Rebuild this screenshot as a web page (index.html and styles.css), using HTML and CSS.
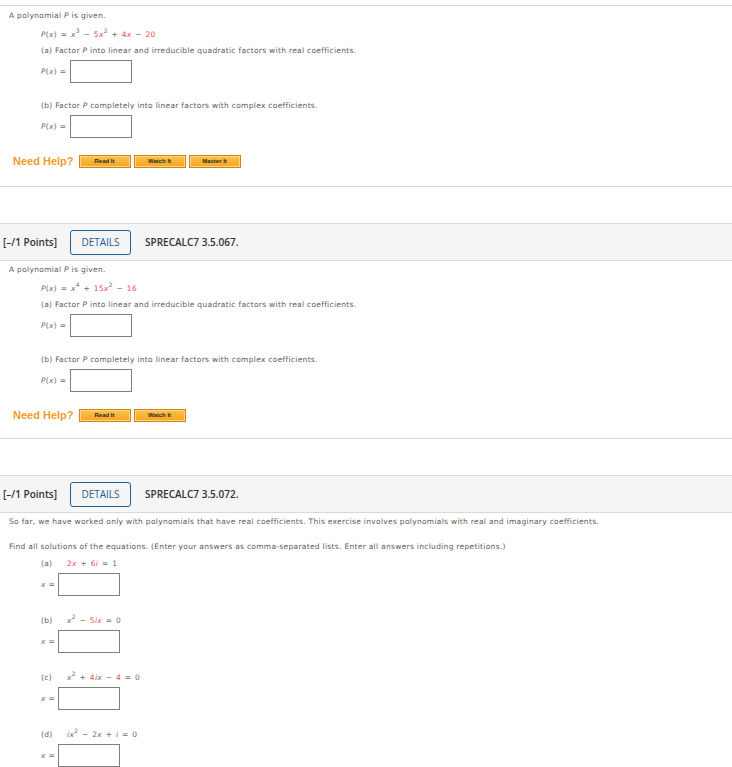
FILE: index.html
```html
<!DOCTYPE html>
<html lang="en">
<head>
  <meta charset="UTF-8">
  <meta name="viewport" content="width=device-width, initial-scale=1.0">
  <title>Assignment</title>
  <link rel="stylesheet" href="styles.css">
</head>

<body>
  <!-- tail of previous question -->
  <div class="question first">
    <div class="q-body">
      <p class="intro">A polynomial <i>P</i> is given.</p>
      <p class="eqn"><i>P</i>(<i>x</i>) = <i>x</i><sup>3</sup> &minus; <span class="rand">5<i>x</i></span><sup>2</sup> + <span class="rand">4<i>x</i></span> &minus; <span class="rand">20</span></p>
      <p class="part">(a) Factor <i>P</i> into linear and irreducible quadratic factors with real coefficients.</p>
      <div class="answer">
        <span class="lbl"><i>P</i>(<i>x</i>) =</span>
        <span class="box"></span>
      </div>
      <p class="part part-b">(b) Factor <i>P</i> completely into linear factors with complex coefficients.</p>
      <div class="answer">
        <span class="lbl"><i>P</i>(<i>x</i>) =</span>
        <span class="box"></span>
      </div>
      <div class="help">
        <span class="help-title">Need Help?</span>
        <span class="help-btn">Read It</span>
        <span class="help-btn">Watch It</span>
        <span class="help-btn">Master It</span>
      </div>
    </div>
  </div>

  <div class="question">
    <div class="q-head">
      <span class="points">[&ndash;/1 Points]</span>
      <span class="details">DETAILS</span>
      <span class="ref">SPRECALC7 3.5.067.</span>
    </div>
    <div class="q-body">
      <p class="intro">A polynomial <i>P</i> is given.</p>
      <p class="eqn"><i>P</i>(<i>x</i>) = <i>x</i><sup>4</sup> + <span class="rand">15<i>x</i></span><sup>2</sup> &minus; <span class="rand">16</span></p>
      <p class="part">(a) Factor <i>P</i> into linear and irreducible quadratic factors with real coefficients.</p>
      <div class="answer">
        <span class="lbl"><i>P</i>(<i>x</i>) =</span>
        <span class="box"></span>
      </div>
      <p class="part part-b">(b) Factor <i>P</i> completely into linear factors with complex coefficients.</p>
      <div class="answer">
        <span class="lbl"><i>P</i>(<i>x</i>) =</span>
        <span class="box"></span>
      </div>
      <div class="help">
        <span class="help-title">Need Help?</span>
        <span class="help-btn">Read It</span>
        <span class="help-btn">Watch It</span>
      </div>
    </div>
  </div>

  <div class="question">
    <div class="q-head">
      <span class="points">[&ndash;/1 Points]</span>
      <span class="details">DETAILS</span>
      <span class="ref">SPRECALC7 3.5.072.</span>
    </div>
    <div class="q-body">
      <p class="intro">So far, we have worked only with polynomials that have real coefficients. This exercise involves polynomials with real and imaginary coefficients.</p>
      <p class="intro find">Find all solutions of the equations. (Enter your answers as comma-separated lists. Enter all answers including repetitions.)</p>

      <p class="sub first-sub"><span class="sub-tag">(a)</span><span class="rand">2<i>x</i></span> + <span class="rand">6<i>i</i></span> = 1</p>
      <div class="answer short">
        <span class="lbl"><i>x</i> =</span>
        <span class="box"></span>
      </div>

      <p class="sub"><span class="sub-tag">(b)</span><i>x</i><sup>2</sup> &minus; <span class="rand">5<i>ix</i></span> = 0</p>
      <div class="answer short">
        <span class="lbl"><i>x</i> =</span>
        <span class="box"></span>
      </div>

      <p class="sub"><span class="sub-tag">(c)</span><i>x</i><sup>2</sup> + <span class="rand">4</span><i>ix</i> &minus; <span class="rand">4</span> = 0</p>
      <div class="answer short">
        <span class="lbl"><i>x</i> =</span>
        <span class="box"></span>
      </div>

      <p class="sub"><span class="sub-tag">(d)</span><i>ix</i><sup>2</sup> &minus; 2<i>x</i> + <i>i</i> = 0</p>
      <div class="answer short">
        <span class="lbl"><i>x</i> =</span>
        <span class="box"></span>
      </div>
    </div>
  </div>
</body>
</html>
```

FILE: styles.css
```css
:root {
  --text: #5c5c5c;
  --math: #6e6e6e;
  --rand: #ec4a52;
  --line: #d8d8d8;
  --head-bg: #f5f5f5;
  --help: #f39a2b;
  --blue: #1f5f96;
}

* {
  margin: 0;
  padding: 0;
  box-sizing: border-box;
}

body {
  font-family: "DejaVu Sans", Verdana, sans-serif;
  font-size: 7.5px;
  letter-spacing: 0.3px;
  color: var(--text);
  background: #fff;
}

p {
  line-height: 10px;
}

sup {
  font-size: 6px;
  line-height: 0;
  vertical-align: 4px;
}

.rand {
  color: var(--rand);
}

/* question blocks */
.question {
  border-bottom: 1px solid var(--line);
  margin-top: 36px;
}

.question.first {
  margin-top: 5px;
  border-top: 1px solid var(--line);
}

.question.first .q-body {
  padding-top: 5px;
  padding-bottom: 18px;
}

.q-head {
  display: flex;
  align-items: center;
  height: 38px;
  padding-left: 3px;
  background: var(--head-bg);
  border-top: 1px solid var(--line);
  border-bottom: 1px solid var(--line);
  font-family: "Open Sans", sans-serif;
  font-size: 10px;
  font-weight: 600;
  letter-spacing: 0;
  color: #333;
}

.details {
  display: flex;
  align-items: center;
  justify-content: center;
  width: 61px;
  height: 25px;
  margin-left: 13px;
  border: 1px solid var(--blue);
  border-radius: 3px;
  color: #245c92;
  font-weight: 500;
}

.ref {
  margin-left: 14px;
}

.q-body {
  padding: 4px 0 16px;
}

.intro {
  padding-left: 9px;
}

.find {
  margin-top: 15px;
}

.eqn {
  margin-top: 9px;
  padding-left: 41px;
  color: var(--math);
  word-spacing: 1px;
}

.part {
  margin-top: 6px;
  padding-left: 41px;
}

.part-b {
  margin-top: 18px;
}

.sub {
  margin-top: 20px;
  padding-left: 41px;
  color: var(--math);
  word-spacing: 1px;
}

.sub.first-sub {
  margin-top: 7px;
}

.sub-tag {
  display: inline-block;
  width: 26px;
  color: var(--text);
}

/* answer rows */
.answer {
  display: flex;
  align-items: center;
  gap: 3px;
  margin-top: 4px;
  padding-left: 41px;
  color: var(--math);
}

.lbl {
  width: 26px;
  white-space: nowrap;
}

.answer.short .lbl {
  width: 14px;
}

.box {
  width: 62px;
  height: 23px;
  border: 1px solid #7f7f7f;
  background: #fff;
}

/* help row */
.help {
  display: flex;
  align-items: center;
  gap: 3px;
  height: 14px;
  margin-top: 16px;
  padding-left: 13px;
}

.help-title {
  margin-right: 2px;
  font-family: "Liberation Sans", Arial, sans-serif;
  font-size: 11px;
  font-weight: 700;
  letter-spacing: 0;
  color: var(--help);
}

.help-btn {
  display: flex;
  align-items: center;
  justify-content: center;
  width: 52px;
  height: 13px;
  background: linear-gradient(#fcc24f, #f6a41f);
  border: 1px solid #cf8614;
  box-shadow: inset 0 0 0 1px #fbd58a;
  font-family: "Liberation Sans", Arial, sans-serif;
  font-size: 6px;
  font-weight: 700;
  letter-spacing: 0;
  color: #2a2a2a;
}
```
